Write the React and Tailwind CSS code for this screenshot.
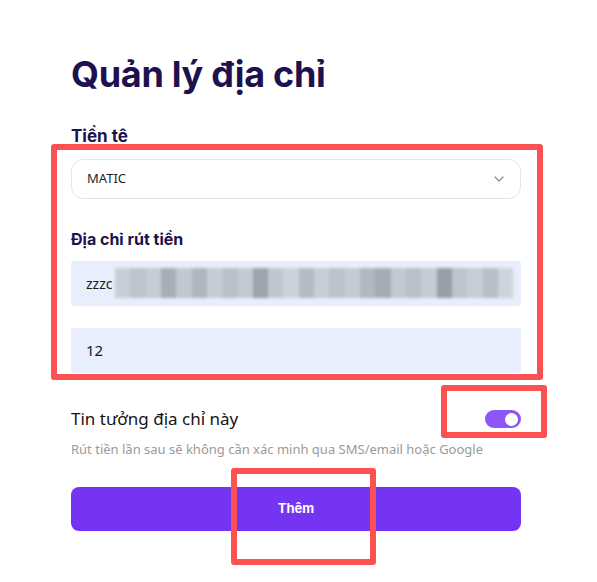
import { useState } from 'react'

const mosaic = [
  'bg-[#c9cdd6]', 'bg-[#bfc3cc]', 'bg-[#c7cbd3]', 'bg-[#a9adb6]', 'bg-[#c3c7cf]', 'bg-[#b1b5bd]',
  'bg-[#c8ccd4]', 'bg-[#bcc0c8]', 'bg-[#c5c9d1]', 'bg-[#9fa3ab]', 'bg-[#c2c6ce]', 'bg-[#cdd1d9]',
  'bg-[#b6bac2]', 'bg-[#c9cdd5]', 'bg-[#bec2ca]', 'bg-[#c6cad2]', 'bg-[#b3b7bf]', 'bg-[#a7abb3]',
  'bg-[#c4c8d0]', 'bg-[#bbbfc7]', 'bg-[#c7cbd3]', 'bg-[#9a9ea6]', 'bg-[#bfc3cb]', 'bg-[#c8ccd4]',
  'bg-[#b9bdc5]', 'bg-[#cfd3db]',
]

export default function App() {
  const [trusted, setTrusted] = useState(true)

  return (
    <div className="relative min-h-[582px] w-[597px] bg-white font-['Noto_Sans',sans-serif]">
      <div className="ml-[71px] w-[450px] pt-[52px]">
        <h1 className="font-['Inter',sans-serif] text-[36px] font-bold leading-[44px] tracking-[-0.3px] text-[#1d1150]">
          Quản lý địa chỉ
        </h1>

        <p className="mt-[28px] font-['Inter',sans-serif] text-[17px] font-bold leading-[24px] text-[#1d1150]">
          Tiền tê
        </p>
        <button
          type="button"
          className="mt-[11px] flex h-[40px] w-full items-center justify-between rounded-xl border border-[#e4e4ee] bg-white pl-[15px] pr-[16px] text-[13px] text-[#1f1f2e]"
        >
          <span>MATIC</span>
          <svg width="10" height="6" viewBox="0 0 10 6" fill="none" className="text-[#8a8aa0]">
            <path d="M1 1l4 4 4-4" stroke="currentColor" strokeWidth="1.2" strokeLinecap="round" strokeLinejoin="round" />
          </svg>
        </button>

        <p className="mt-[28px] font-['Inter',sans-serif] text-[16px] font-bold leading-[24px] text-[#1d1150]">
          Địa chỉ rút tiền
        </p>
        <div className="relative mt-[10px] flex h-[45px] w-full items-center overflow-hidden rounded-[3px] bg-[#e8eefc] px-[15px] text-[14px] text-[#1a1a1a]">
          <span>zzzc</span>
          <div className="absolute left-[44px] top-[7px] flex h-[30px] w-[398px] blur-[1.5px]">
            {mosaic.map((c, i) => (
              <span key={i} className={`h-full flex-1 ${c}`} />
            ))}
          </div>
        </div>
        <div className="mt-[22px] flex h-[45px] w-full items-center rounded-[3px] bg-[#e8eefc] px-[15px] text-[15px] text-[#1a1a1a]">
          12
        </div>

        <div className="mt-[34px] flex items-center justify-between">
          <span className="text-[17px] leading-[24px] text-[#141414]">Tin tưởng địa chỉ này</span>
          <button
            type="button"
            onClick={() => setTrusted(!trusted)}
            className={`flex h-[18px] w-[36px] items-center rounded-full px-[3px] ${
              trusted ? 'justify-end bg-[#8b55f7]' : 'justify-start bg-gray-300'
            }`}
          >
            <span className="h-[13px] w-[13px] rounded-full bg-white" />
          </button>
        </div>
        <p className="mt-[9px] text-[13px] leading-[18px] text-[#9a9a9a]">
          Rút tiền lần sau sẽ không cần xác minh qua SMS/email hoặc Google
        </p>

        <button
          type="button"
          className="mt-[29px] flex h-[44px] w-full items-center justify-center rounded-lg bg-[#7434f2] font-['Inter',sans-serif] text-[13px] font-bold text-white"
        >
          Thêm
        </button>
      </div>

      <div className="pointer-events-none absolute left-[51px] top-[144px] h-[236px] w-[492px] rounded-[3px] border-[6px] border-[#fa5252]" />
      <div className="pointer-events-none absolute left-[441px] top-[385px] h-[53px] w-[106px] rounded-[3px] border-[6px] border-[#fa5252]" />
      <div className="pointer-events-none absolute left-[231px] top-[468px] h-[97px] w-[145px] rounded-[3px] border-[6px] border-[#fa5252]" />
    </div>
  )
}
